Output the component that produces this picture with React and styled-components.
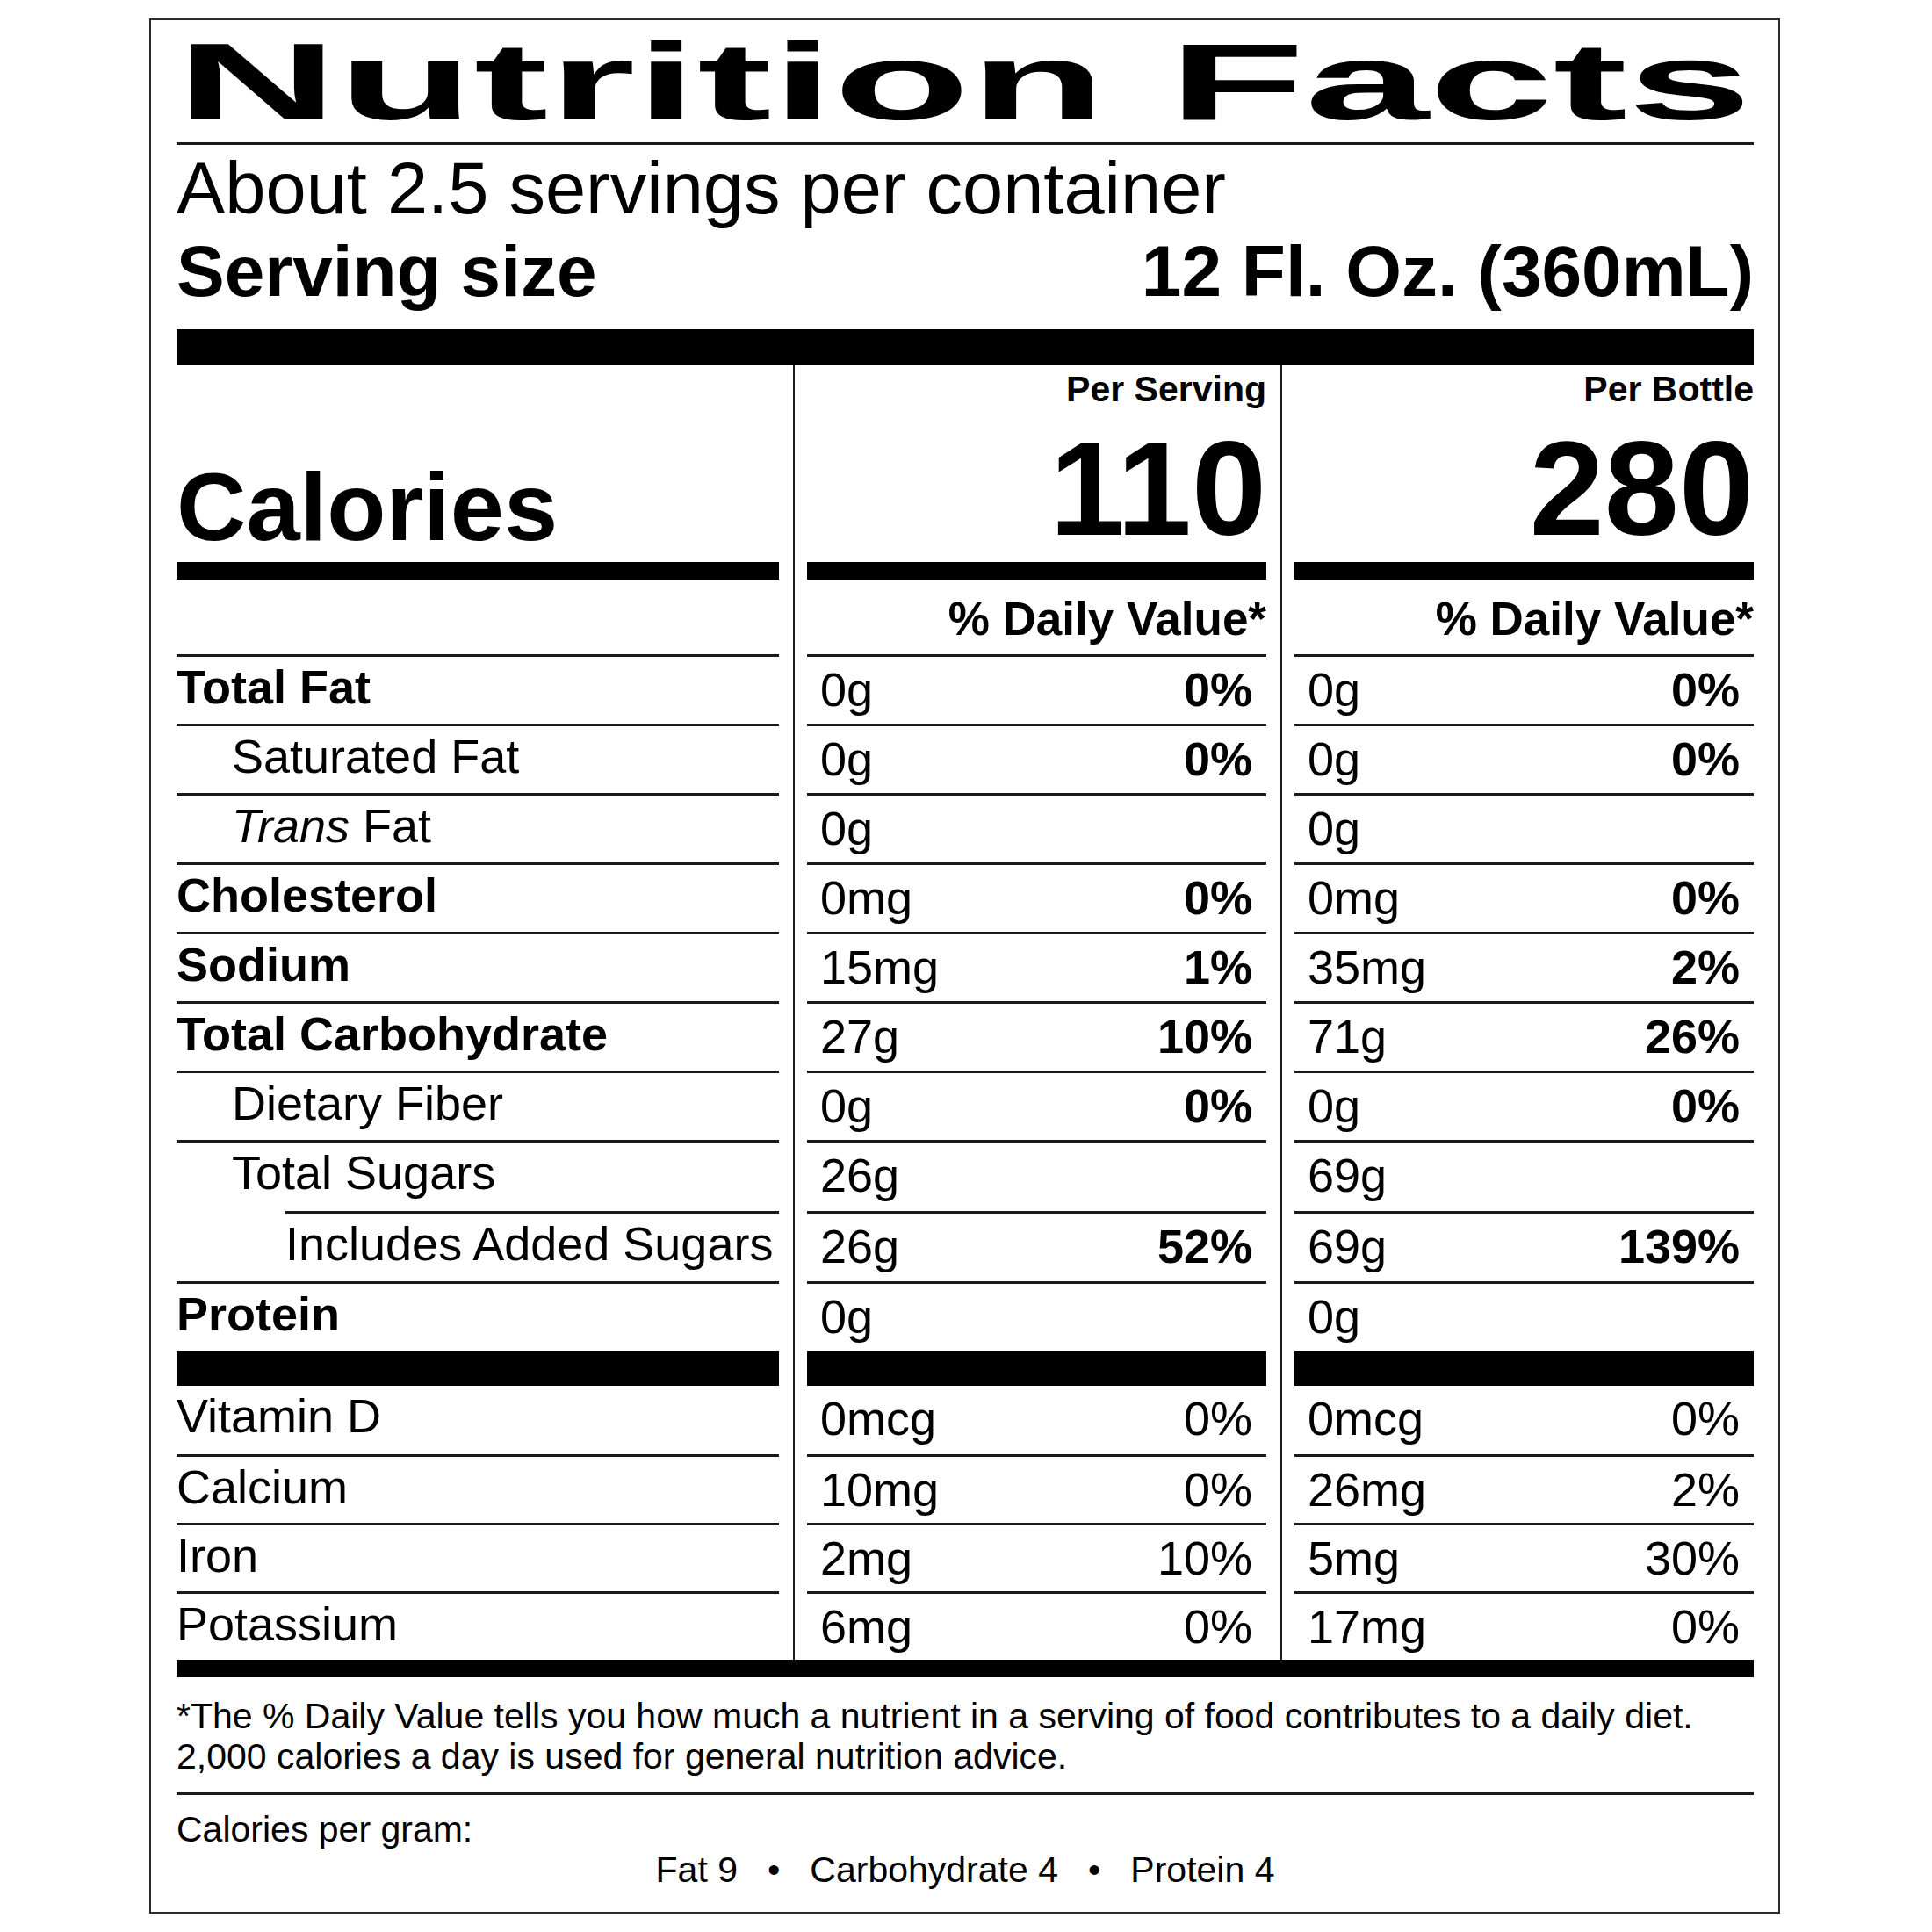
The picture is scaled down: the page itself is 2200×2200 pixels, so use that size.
import React from "react";
import styled, { createGlobalStyle } from "styled-components";

const GlobalStyle = createGlobalStyle`
  html, body { margin: 0; padding: 0; background: #ffffff; }
  body { font-family: "Liberation Sans", Arial, Helvetica, sans-serif; color: #000; }
`;

const Label = styled.section`
  box-sizing: border-box;
  width: 1857px;
  margin: 21px 0 0 170px;
  border: 2px solid #2a2a2a;
  padding: 8px 28px 25px 29px;
  background: #fff;
`;

const Title = styled.h1`
  margin: 0;
  height: 124px;
  font-size: 124px;
  line-height: 1;
  font-weight: 700;
  white-space: nowrap;
  overflow: visible;
`;

const TitleText = styled.span`
  display: inline-block;
  transform: scaleX(2.05);
  transform-origin: left center;
`;

const Rule = styled.div`
  height: ${(p) => p.$h || 3}px;
  margin-top: ${(p) => p.$mt || 0}px;
  background: ${(p) => (p.$h > 5 ? "#000" : "#1a1a1a")};
`;

const Servings = styled.div`
  margin-top: 8px;
  font-size: 83px;
  line-height: 1;
  height: 82px;
  white-space: nowrap;
`;

const ServingSize = styled.div`
  margin-top: 13px;
  display: flex;
  justify-content: space-between;
  font-size: 82px;
  line-height: 1;
  height: 82px;
  font-weight: 700;
  white-space: nowrap;
`;

const Row = styled.div`
  display: grid;
  grid-template-columns: 686px 1fr 1fr;
  height: ${(p) => p.$h}px;
`;

const Side = styled.div`
  margin-left: 16px;
  border-left: 2px solid #1e1e1e;
  padding-left: 14px;
  display: flex;
  flex-direction: column;
  min-width: 0;
`;

const Block = styled.div`
  flex: 1;
  background: #000;
`;

const CalLabel = styled.div`
  display: flex;
  align-items: flex-end;
  padding-bottom: 8px;
  font-size: 110px;
  line-height: 1;
  font-weight: 700;
`;

const CalSide = styled(Side)`
  justify-content: space-between;
  align-items: flex-end;
  padding-top: 7px;
  padding-bottom: 8px;
`;

const PerLabel = styled.div`
  font-size: 41px;
  line-height: 1;
  font-weight: 700;
  white-space: nowrap;
`;

const CalNumber = styled.div`
  font-size: 153px;
  line-height: 1;
  font-weight: 700;
`;

const DVHead = styled.div`
  padding-top: 18px;
  font-size: 53px;
  line-height: 1;
  font-weight: 700;
  text-align: right;
  white-space: nowrap;
`;

const NutrientName = styled.div`
  box-sizing: border-box;
  border-top: ${(p) => (p.$rule ? "3px solid #1a1a1a" : "none")};
  margin-left: ${(p) => p.$ruleInset}px;
  padding-left: ${(p) => p.$indent - p.$ruleInset}px;
  padding-top: 7px;
  font-size: 54px;
  line-height: 1;
  font-weight: ${(p) => (p.$bold ? 700 : 400)};
  white-space: nowrap;
`;

const Value = styled.div`
  flex: 1;
  box-sizing: border-box;
  border-top: ${(p) => (p.$rule ? "3px solid #1a1a1a" : "none")};
  display: flex;
  justify-content: space-between;
  padding: 10px 16px 0 15px;
  font-size: 54px;
  line-height: 1;
  white-space: nowrap;
`;

const Pct = styled.span`
  font-weight: ${(p) => (p.$bold ? 700 : 400)};
`;

const Footnote = styled.p`
  margin: 21px 0 0;
  font-size: 41px;
  line-height: 46px;
  white-space: nowrap;
`;

const PerGram = styled.div`
  margin-top: 16px;
  font-size: 41px;
  line-height: 46px;
`;

const Factors = styled.div`
  display: flex;
  justify-content: center;
  gap: 34px;
  font-size: 41px;
  line-height: 46px;
  white-space: nowrap;
`;

const INDENT = [0, 63, 124];

const nutrients = [
  { name: "Total Fat", bold: true, lvl: 0, h: 79, a: ["0g", "0%"], b: ["0g", "0%"] },
  { name: "Saturated Fat", lvl: 1, h: 79, a: ["0g", "0%"], b: ["0g", "0%"] },
  { name: "Trans Fat", trans: true, lvl: 1, h: 79, a: ["0g", ""], b: ["0g", ""] },
  { name: "Cholesterol", bold: true, lvl: 0, h: 79, a: ["0mg", "0%"], b: ["0mg", "0%"] },
  { name: "Sodium", bold: true, lvl: 0, h: 79, a: ["15mg", "1%"], b: ["35mg", "2%"] },
  { name: "Total Carbohydrate", bold: true, lvl: 0, h: 79, a: ["27g", "10%"], b: ["71g", "26%"] },
  { name: "Dietary Fiber", lvl: 1, h: 79, a: ["0g", "0%"], b: ["0g", "0%"] },
  { name: "Total Sugars", lvl: 1, h: 81, a: ["26g", ""], b: ["69g", ""] },
  { name: "Includes Added Sugars", lvl: 2, inset: 124, h: 80, a: ["26g", "52%"], b: ["69g", "139%"] },
  { name: "Protein", bold: true, lvl: 0, h: 79, a: ["0g", ""], b: ["0g", ""] },
];

const vitamins = [
  { name: "Vitamin D", a: ["0mcg", "0%"], b: ["0mcg", "0%"] },
  { name: "Calcium", a: ["10mg", "0%"], b: ["26mg", "2%"] },
  { name: "Iron", a: ["2mg", "10%"], b: ["5mg", "30%"] },
  { name: "Potassium", a: ["6mg", "0%"], b: ["17mg", "0%"] },
];

function BarRow({ h }) {
  return (
    <Row $h={h}>
      <Block />
      <Side><Block /></Side>
      <Side><Block /></Side>
    </Row>
  );
}

function NutrientRow({ item, rule, boldPct }) {
  return (
    <Row $h={item.h || 78}>
      <NutrientName
        $rule={rule}
        $bold={item.bold}
        $indent={INDENT[item.lvl || 0]}
        $ruleInset={item.inset || 0}
      >
        {item.trans ? (
          <>
            <i>Trans</i> Fat
          </>
        ) : (
          item.name
        )}
      </NutrientName>
      {[item.a, item.b].map((v, i) => (
        <Side key={i}>
          <Value $rule={rule}>
            <span>{v[0]}</span>
            <Pct $bold={boldPct}>{v[1]}</Pct>
          </Value>
        </Side>
      ))}
    </Row>
  );
}

export default function App() {
  return (
    <>
      <GlobalStyle />
      <Label>
        <Title>
          <TitleText>Nutrition Facts</TitleText>
        </Title>
        <Rule $mt={7} $h={3} />
        <Servings>About 2.5 servings per container</Servings>
        <ServingSize>
          <span>Serving size</span>
          <span>12 Fl. Oz. (360mL)</span>
        </ServingSize>
        <Rule $mt={25} $h={41} />

        <Row $h={224}>
          <CalLabel>Calories</CalLabel>
          <CalSide>
            <PerLabel>Per Serving</PerLabel>
            <CalNumber>110</CalNumber>
          </CalSide>
          <CalSide>
            <PerLabel>Per Bottle</PerLabel>
            <CalNumber>280</CalNumber>
          </CalSide>
        </Row>
        <BarRow h={20} />
        <Row $h={85}>
          <div />
          <Side>
            <DVHead>% Daily Value*</DVHead>
          </Side>
          <Side>
            <DVHead>% Daily Value*</DVHead>
          </Side>
        </Row>

        {nutrients.map((n) => (
          <NutrientRow key={n.name} item={n} rule boldPct />
        ))}

        <BarRow h={40} />

        {vitamins.map((v, i) => (
          <NutrientRow key={v.name} item={{ ...v, h: 78 }} rule={i > 0} />
        ))}

        <Rule $h={20} />
        <Footnote>
          *The % Daily Value tells you how much a nutrient in a serving of food contributes to a daily diet.
          <br />
          2,000 calories a day is used for general nutrition advice.
        </Footnote>
        <Rule $mt={18} $h={3} />
        <PerGram>Calories per gram:</PerGram>
        <Factors>
          <span>Fat 9</span>
          <span>•</span>
          <span>Carbohydrate 4</span>
          <span>•</span>
          <span>Protein 4</span>
        </Factors>
      </Label>
    </>
  );
}
